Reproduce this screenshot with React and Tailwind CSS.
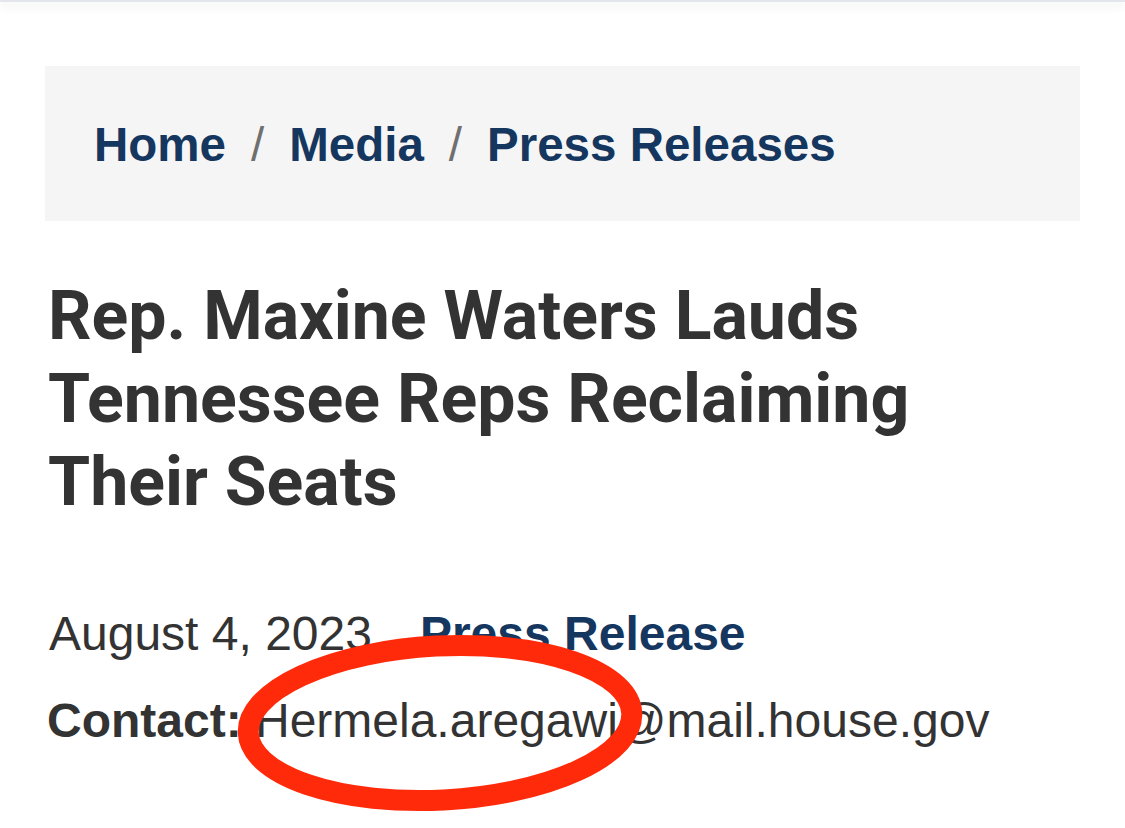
import React from "react";

const crumbs = ["Home", "Media", "Press Releases"];

const App = () => {
  return (
    <div
      className="relative min-h-[828px] bg-white overflow-hidden text-[#333333]"
      style={{ fontFamily: '"Liberation Sans", Arial, sans-serif' }}
    >
      {/* header shadow from the sticky bar above */}
      <div className="h-[2px] bg-[#e3e6ea] shadow-[0_3px_10px_rgba(60,70,80,0.18)]"></div>

      <div className="px-[45px] pt-[64px]">
        {/* Breadcrumb */}
        <nav className="bg-[#f5f5f5] h-[155px] flex items-center pl-[49px] pt-[3px] text-[47.5px] font-bold text-[#15375f] leading-none">
          {crumbs.map((c, i) => (
            <React.Fragment key={c}>
              {i > 0 && (
                <span className="mx-[25px] font-normal text-[#6f6f6f]">/</span>
              )}
              <a href="#" className="whitespace-nowrap">
                {c}
              </a>
            </React.Fragment>
          ))}
        </nav>

        {/* Title */}
        <h1
          className="mt-[54px] pl-[3px] text-[68px] font-bold leading-[83px] tracking-[0px] text-[#333333]"
          style={{ fontFamily: 'Roboto, "Open Sans", sans-serif' }}
        >
          Rep. Maxine Waters Lauds
          <br />
          Tennessee Reps Reclaiming
          <br />
          Their Seats
        </h1>

        {/* Meta */}
        <div className="mt-[86px] pl-[4px] text-[48px] leading-none flex items-baseline">
          <span className="text-[#333333]">August 4, 2023</span>
          <a href="#" className="ml-[48px] font-bold text-[#15375f]">
            Press Release
          </a>
        </div>
        <div className="mt-[39px] pl-[2px] text-[48px] leading-none">
          <span className="font-bold">Contact: </span>
          <span>Hermela.aregawi@mail.house.gov</span>
        </div>
      </div>

      {/* red annotation ellipse */}
      <svg
        className="absolute left-[228px] top-[626px] pointer-events-none"
        width="424"
        height="195"
        viewBox="0 0 424 195"
      >
        <ellipse
          cx="212"
          cy="97"
          rx="192"
          ry="77"
          fill="none"
          stroke="#ff2a0a"
          strokeWidth="21"
          transform="rotate(-3 212 97)"
        />
      </svg>
    </div>
  );
};

export default App;
